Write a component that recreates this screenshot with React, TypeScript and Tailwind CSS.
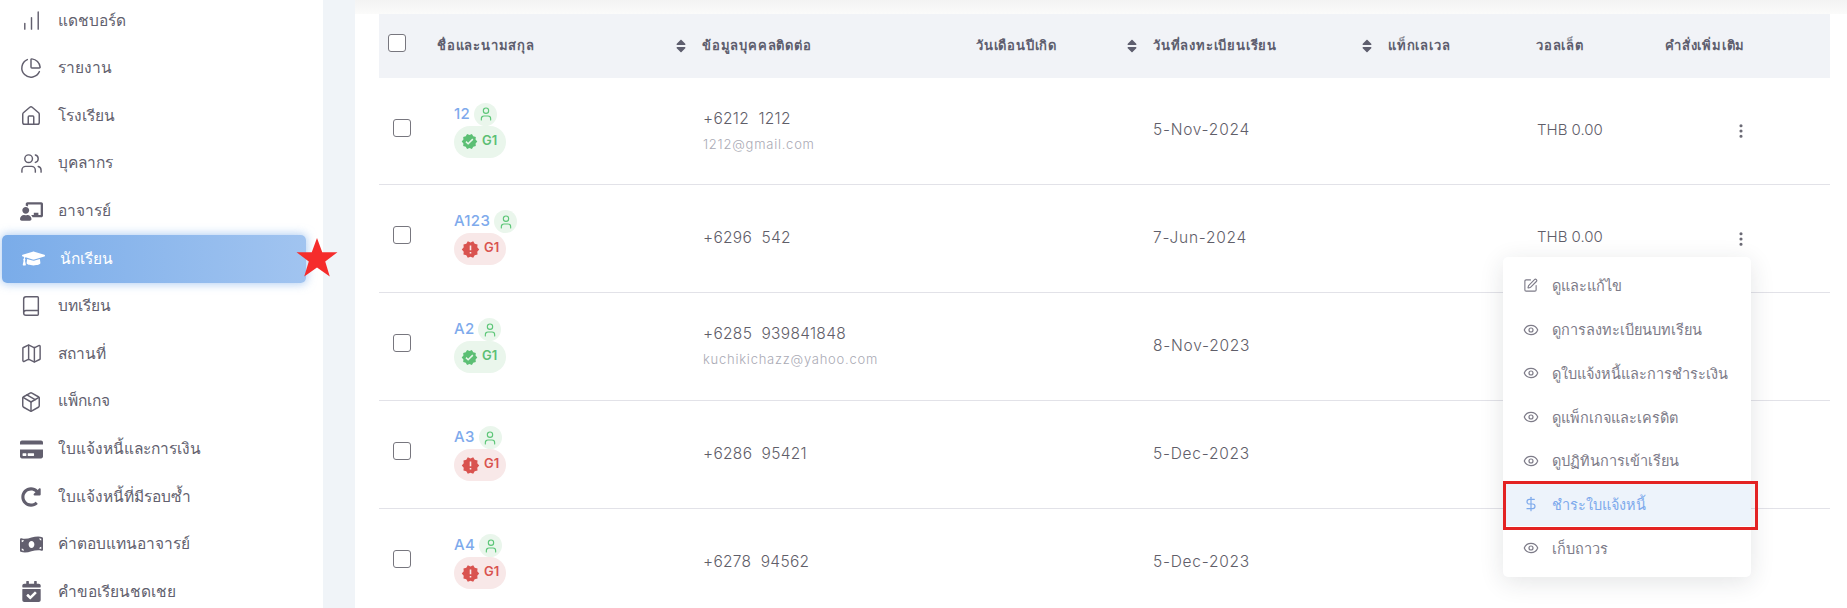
import {
  Book,
  ChartNoAxesColumnIncreasing,
  ChartPie,
  DollarSign,
  EllipsisVertical,
  Eye,
  House,
  Map,
  Package,
  SquarePen,
  User,
  Users,
} from "lucide-react";
import {
  FaCalendarCheck,
  FaChalkboardTeacher,
  FaCreditCard,
  FaGraduationCap,
  FaMoneyBillWave,
  FaRedoAlt,
  FaSort,
} from "react-icons/fa";
import { MdNewReleases, MdVerified } from "react-icons/md";

const navItems = [
  { label: "แดชบอร์ด", icon: <ChartNoAxesColumnIncreasing size={23} strokeWidth={1.5} /> },
  { label: "รายงาน", icon: <ChartPie size={22} strokeWidth={1.6} /> },
  { label: "โรงเรียน", icon: <House size={22} strokeWidth={1.6} /> },
  { label: "บุคลากร", icon: <Users size={23} strokeWidth={1.5} /> },
  { label: "อาจารย์", icon: <FaChalkboardTeacher size={23} /> },
  { label: "นักเรียน", icon: <FaGraduationCap size={23} />, active: true },
  { label: "บทเรียน", icon: <Book size={22} strokeWidth={1.6} /> },
  { label: "สถานที่", icon: <Map size={23} strokeWidth={1.5} /> },
  { label: "แพ็กเกจ", icon: <Package size={22} strokeWidth={1.6} /> },
  { label: "ใบแจ้งหนี้และการเงิน", icon: <FaCreditCard size={23} /> },
  { label: "ใบแจ้งหนี้ที่มีรอบซ้ำ", icon: <FaRedoAlt size={20} /> },
  { label: "ค่าตอบแทนอาจารย์", icon: <FaMoneyBillWave size={23} /> },
  { label: "คำขอเรียนชดเชย", icon: <FaCalendarCheck size={21} /> },
];

const students = [
  { name: "12", phone: "+6212  1212", email: "1212@gmail.com", date: "5-Nov-2024", ok: true },
  { name: "A123", phone: "+6296  542", email: "", date: "7-Jun-2024", ok: false },
  { name: "A2", phone: "+6285  939841848", email: "kuchikichazz@yahoo.com", date: "8-Nov-2023", ok: true },
  { name: "A3", phone: "+6286  95421", email: "", date: "5-Dec-2023", ok: false },
  { name: "A4", phone: "+6278  94562", email: "", date: "5-Dec-2023", ok: false },
];

const menuItems = [
  { label: "ดูและแก้ไข", icon: <SquarePen size={15} strokeWidth={1.8} /> },
  { label: "ดูการลงทะเบียนบทเรียน", icon: <Eye size={16} strokeWidth={1.8} /> },
  { label: "ดูใบแจ้งหนี้และการชำระเงิน", icon: <Eye size={16} strokeWidth={1.8} /> },
  { label: "ดูแพ็กเกจและเครดิต", icon: <Eye size={16} strokeWidth={1.8} /> },
  { label: "ดูปฏิทินการเข้าเรียน", icon: <Eye size={16} strokeWidth={1.8} /> },
  { label: "ชำระใบแจ้งหนี้", icon: <DollarSign size={16} strokeWidth={1.8} />, active: true },
  { label: "เก็บถาวร", icon: <Eye size={16} strokeWidth={1.8} /> },
];

const gridCols = "grid grid-cols-[58px_265px_274px_177px_235px_148px_129px_165px]";

function HeadCell({ label, sort }: { label: string; sort?: boolean }) {
  return (
    <div className="flex items-center justify-between pr-[13px]">
      <span className="text-[13px] font-bold tracking-[0.8px] text-[#5e5e6e]">{label}</span>
      {sort && <FaSort size={16} className="text-[#5e5e6e]" />}
    </div>
  );
}

function Sidebar() {
  return (
    <aside className="w-[323px] shrink-0 bg-white">
      <nav className="-mt-[3px] flex flex-col">
        {navItems.map((item) => (
          <div
            key={item.label}
            className={`flex h-[47.6px] items-center gap-[15px] pl-[19px] text-[15.5px] ${
              item.active
                ? "ml-[2px] mr-[17px] rounded-[5px] bg-gradient-to-r from-[#7aace9] to-[#a1c4f0] pl-[17px] text-white shadow-[0_0_10px_1px_rgba(122,172,233,0.6)]"
                : "text-[#625f6e]"
            }`}
          >
            <span className="flex w-[24px] justify-center">{item.icon}</span>
            <span className="-mt-[1px]">{item.label}</span>
          </div>
        ))}
      </nav>
    </aside>
  );
}

function StudentRow({ s, index }: { s: (typeof students)[number]; index: number }) {
  return (
    <div className={`${gridCols} items-center border-b border-[#e2e2e8] ${index === 0 ? "h-[107px]" : "h-[108px]"}`}>
      <div className="-mt-[7px] pl-[14px]">
        <span className="block h-[18px] w-[18px] rounded-[3px] border-[1.5px] border-[#77767e] bg-white" />
      </div>
      <div className="-mt-[2px] pl-[17px]">
        <div className="flex items-center gap-[4px]">
          <span className="text-[15px] font-medium tracking-[0.3px] text-[#7eaaec]">{s.name}</span>
          <span className="flex h-[23px] w-[23px] items-center justify-center rounded-full bg-[#eaf6ec] text-[#5cc677]">
            <User size={16} strokeWidth={1.7} />
          </span>
        </div>
        <div
          className={`flex h-[32px] w-[52px] items-center gap-[4px] rounded-full pl-[7px] text-[13px] font-semibold ${
            s.ok ? "bg-[#eaf6ec] text-[#5cbf74]" : "bg-[#f8e8e8] text-[#d9534f]"
          }`}
        >
          {s.ok ? <MdVerified size={17} /> : <MdNewReleases size={19} />}
          <span className="-mt-[2px]">G1</span>
        </div>
      </div>
      <div className="-mt-[1px] pl-[1px]">
        <div className="whitespace-pre text-[15.5px] font-light tracking-[0.3px] text-[#5f5e69]">{s.phone}</div>
        {s.email && <div className="mt-[5px] text-[13px] font-light tracking-[0.75px] text-[#aaaab5]">{s.email}</div>}
      </div>
      <div />
      <div className="-mt-[2px] text-[15.5px] font-light tracking-[0.75px] text-[#5f5e69]">{s.date}</div>
      <div />
      {/* rows under the open menu: wallet and actions are covered anyway */}
      {index < 2 ? (
        <>
          <div className="-mt-[2px] pl-[1px] text-[15px] font-light text-[#5f5e69]">THB 0.00</div>
          <div className="pl-[67px] text-[#6b6a75]">
            <EllipsisVertical size={18} strokeWidth={2.2} />
          </div>
        </>
      ) : null}
    </div>
  );
}

function ActionMenu() {
  return (
    <div className="absolute left-[1503px] top-[257px] w-[248px] rounded-[5px] bg-white py-[7px] shadow-[0_5px_25px_rgba(34,41,47,0.12)]">
      {menuItems.map((item) => (
        <div key={item.label} className="relative">
          <div
            className={`flex h-[43.7px] items-center gap-[13px] pl-[19px] text-[14.5px] ${
              item.active ? "bg-[#edf3fb] text-[#7eaaec]" : "text-[#7d7b88]"
            }`}
          >
            <span className="flex w-[17px] justify-center">{item.icon}</span>
            <span className="mt-[1px]">{item.label}</span>
          </div>
          {item.active && (
            <span className="absolute left-0 -top-[1px] h-[49px] w-[255px] border-[3px] border-[#e32222]" />
          )}
        </div>
      ))}
    </div>
  );
}

export default function App() {
  return (
    <div className="relative flex h-[608px] w-[1847px] overflow-hidden bg-white font-['Inter','Noto_Sans',sans-serif]">
      <Sidebar />
      <div className="w-[32px] shrink-0 bg-[#f0f4f8]" />
      <main className="flex-1 bg-white">
        <div className="h-[14px] bg-gradient-to-b from-[#f3f3f3] to-[#fbfbfa]" />
        <div className="pl-[24px] pr-[18px]">
          <div className={`${gridCols} h-[64px] items-center bg-[#f1f3f7]`}>
            <div className="-mt-[7px] pl-[9px]">
              <span className="block h-[18px] w-[18px] rounded-[3px] border-[1.5px] border-[#77767e] bg-white" />
            </div>
            <HeadCell label="ชื่อและนามสกุล" sort />
            <HeadCell label="ข้อมูลบุคคลติดต่อ" />
            <HeadCell label="วันเดือนปีเกิด" sort />
            <HeadCell label="วันที่ลงทะเบียนเรียน" sort />
            <HeadCell label="แท็กเลเวล" />
            <HeadCell label="วอลเล็ต" />
            <HeadCell label="คำสั่งเพิ่มเติม" />
          </div>
          {students.map((s, i) => (
            <StudentRow key={s.name} s={s} index={i} />
          ))}
        </div>
      </main>
      <ActionMenu />
      {/* red star drawn over the active row */}
      <svg viewBox="0 0 24 24" className="absolute left-[296px] top-[237px] h-[42px] w-[42px] fill-[#f52c2c]">
        <path d="M12 0.5l3 8.2h8.7l-7 5.3 2.6 8.6L12 17.4l-7.3 5.2 2.6-8.6-7-5.3H9z" />
      </svg>
    </div>
  );
}
